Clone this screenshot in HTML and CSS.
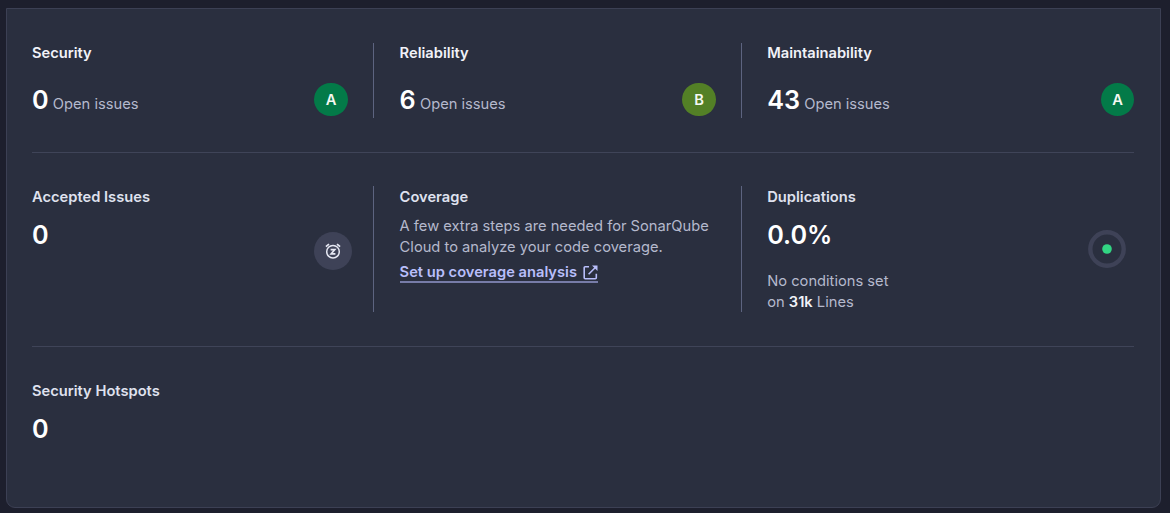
FILE: index.html
```html
<!DOCTYPE html>
<html lang="en">
<head>
<meta charset="utf-8">
<title>Project overview</title>
<link rel="stylesheet" href="styles.css">
</head>
<body>
<main class="panel">
  <section class="row row-issues">
    <article class="cell">
      <h2 class="title bright">Security</h2>
      <div class="metric"><p class="count"><span class="value">0</span><span class="label">Open issues</span></p><span class="rating rating-a">A</span></div>
    </article>
    <article class="cell">
      <h2 class="title bright">Reliability</h2>
      <div class="metric"><p class="count"><span class="value">6</span><span class="label">Open issues</span></p><span class="rating rating-b">B</span></div>
    </article>
    <article class="cell">
      <h2 class="title bright">Maintainability</h2>
      <div class="metric"><p class="count"><span class="value">43</span><span class="label">Open issues</span></p><span class="rating rating-a">A</span></div>
    </article>
  </section>
  <section class="row row-measures">
    <article class="cell cell-split">
      <div>
        <h2 class="title">Accepted Issues</h2>
        <p class="value stacked">0</p>
      </div>
      <span class="snooze">
        <svg width="18" height="18" viewBox="0 0 18 18" fill="none" stroke="#e6e8f3" stroke-width="1.5">
          <circle cx="9" cy="9.7" r="6.3"/>
          <path d="M1.9 4.7 5 2.1M16.1 4.7 13 2.1" stroke-width="1.7"/>
          <path d="M6.6 7.6h4.2L7.2 11.8h4.2" stroke-width="1.7"/>
        </svg>
      </span>
    </article>
    <article class="cell">
      <h2 class="title">Coverage</h2>
      <p class="text coverage-text">A few extra steps are needed for SonarQube Cloud to analyze your code coverage.</p>
      <a class="link" href="#">Set up coverage analysis
        <svg class="external" width="15" height="15" viewBox="0 0 15 15" fill="none" stroke="currentColor" stroke-width="1.6">
          <path d="M6 1.7H2.2a1 1 0 0 0-1 1v10.1a1 1 0 0 0 1 1h10.1a1 1 0 0 0 1-1V8.8M5.6 9.3l7-7"/>
          <path d="M9 .5h5.5V6z" fill="currentColor" stroke="none"/>
        </svg>
      </a>
    </article>
    <article class="cell cell-split">
      <div>
        <h2 class="title">Duplications</h2>
        <p class="value stacked">0.0%</p>
        <p class="text conditions">No conditions set<br>on <strong>31k</strong> Lines</p>
      </div>
      <svg class="ring" width="38" height="38" viewBox="0 0 38 38">
        <circle cx="19" cy="19" r="16.7" fill="none" stroke="#3e4257" stroke-width="4.4"/>
        <circle cx="19" cy="19" r="4.8" fill="#32d583"/>
      </svg>
    </article>
  </section>
  <section class="row row-hotspots">
    <article class="cell">
      <h2 class="title">Security Hotspots</h2>
      <p class="value stacked">0</p>
    </article>
  </section>
</main>
</body>
</html>
```
FILE: styles.css
```css
* { box-sizing: border-box; }
body {
  margin: 0;
  height: 513px;
  padding: 8px 9px 5px 6px;
  background: #1d1f2d;
  color: #b5b9cd;
  font: 400 14.7px/21px Inter, "Liberation Sans", sans-serif;
  overflow: hidden;
}
h2, p { margin: 0; }
.panel {
  height: 500px;
  padding: 0 25px;
  background: #2a2f3f;
  border: 1px solid #3c4054;
  border-radius: 0 0 9px 9px;
}
.row {
  display: grid;
  grid-template-columns: 342px 368px 1fr;
  width: 1102.4px;
}
.row-issues { padding: 34px 0; height: 144px; border-bottom: 1px solid #3f4458; }
.row-measures { padding: 33px 0 34px; height: 194px; border-bottom: 1px solid #3f4458; }
.row-hotspots { padding-top: 34px; }
.cell { padding: 0 25px 0 25.6px; border-right: 1px solid #5d6480; }
.cell:first-child { padding-left: 0; }
.cell:last-child { padding: 0 0 0 25.2px; border-right: 0; }
.row-hotspots .cell:last-child { padding-left: 0; }
.title { font-size: 14.7px; line-height: 21px; font-weight: 600; color: #dfe1ee; }
.bright { color: #f1f2f8; }
.row-measures .title { margin-top: 1px; }
.metric { display: flex; align-items: flex-start; justify-content: space-between; margin-top: 19px; }
.count { display: flex; align-items: baseline; gap: 4.2px; }
.value { font-size: 25.2px; line-height: 34px; font-weight: 600; color: #fff; }
.rating {
  width: 33.6px;
  height: 33.6px;
  margin-top: -0.5px;
  border-radius: 50%;
  color: #f5f8f2;
  font-weight: 600;
  line-height: 35px;
  text-align: center;
}
.rating-a { background: #037a48; }
.rating-b { background: #538026; }
.stacked { margin-top: 10px; }
.cell-split { display: flex; justify-content: space-between; }
.snooze {
  display: flex;
  align-items: center;
  justify-content: center;
  width: 38px;
  height: 38px;
  margin: 46.4px -4.4px 0 0;
  border-radius: 50%;
  background: #3e4257;
}
.ring { margin: 44.4px 8.2px 0 0; }
.coverage-text { margin: 8px -10px 0 0; }
.link {
  display: inline-flex;
  align-items: center;
  gap: 6px;
  height: 20px;
  margin-top: 4px;
  padding-top: 1px;
  box-shadow: 0 1px 0 #777ca8;
  border-bottom: 1px solid #777ca8;
  color: #b8befa;
  font-weight: 600;
  text-decoration: none;
  white-space: nowrap;
}
.conditions { margin: 19px 0 -1px; }
.conditions strong { color: #f1f2f8; font-weight: 600; }
```
